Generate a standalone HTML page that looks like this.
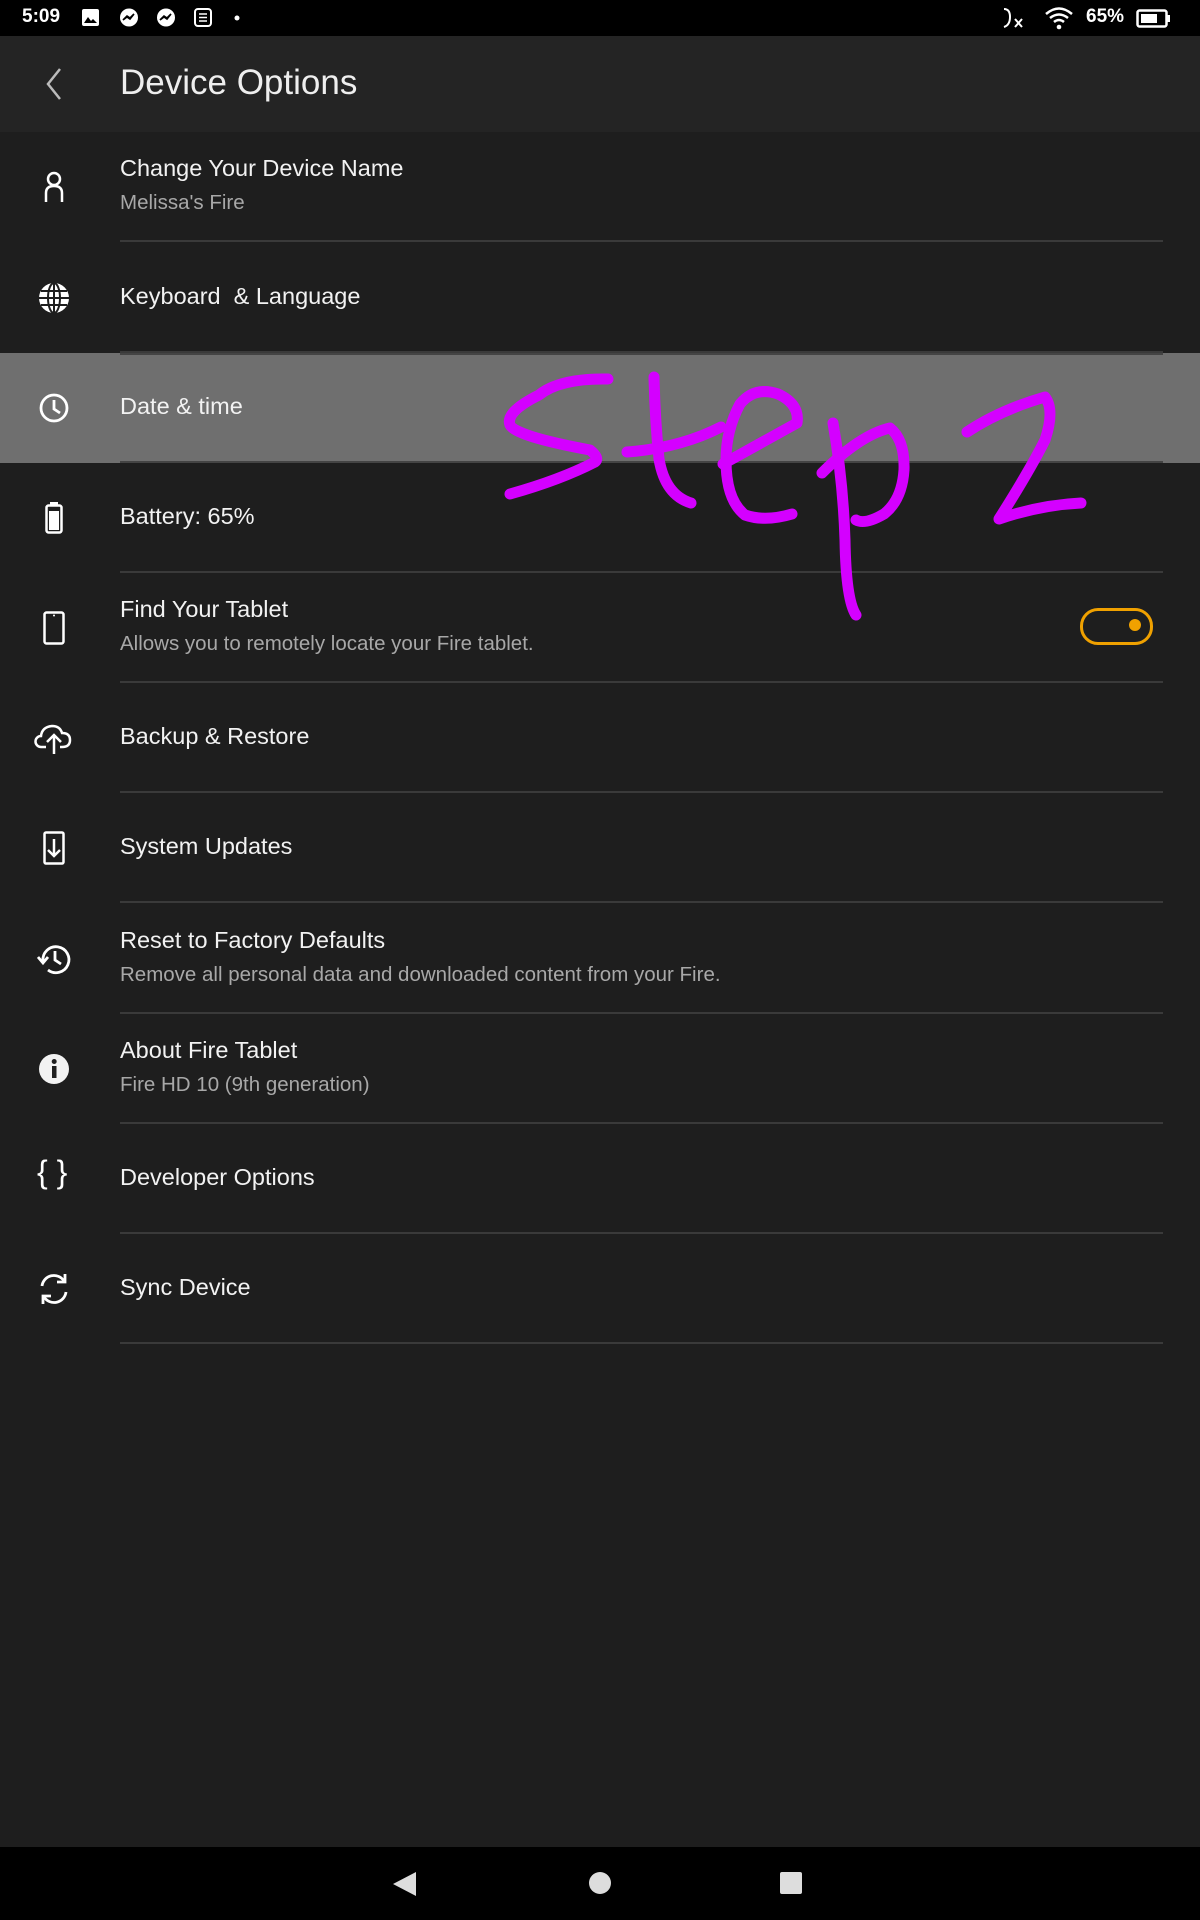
<!DOCTYPE html>
<html><head><meta charset="utf-8"><style>
body{margin:0;width:1200px;height:1920px;background:#1e1e1e;font-family:"Liberation Sans",sans-serif;position:relative;overflow:hidden;color:#f0f0f0}
.abs{position:absolute}
.sb{left:0;top:0;width:1200px;height:36px;background:#000}
.hd{left:0;top:36px;width:1200px;height:96px;background:#242424}
.row{position:absolute;left:0;width:1200px;height:110px}
.row .sep{position:absolute;left:120px;right:37px;bottom:0;height:2px;background:#3a3a3a}
.t{position:absolute;left:120px;font-size:23.5px;color:#f2f2f2;white-space:nowrap}
.s{position:absolute;left:120px;font-size:20.5px;color:#a8a8a8;white-space:nowrap}
.ic{position:absolute;left:36px;width:36px;height:36px}
</style></head><body>
<div class="abs sb"></div>
<div class="abs" style="left:22px;top:6px;font-size:19px;color:#fff;font-weight:bold">5:09</div>
<svg class="abs" style="left:80px;top:7px" width="170" height="22" viewBox="0 0 170 22">
<rect x="2" y="2" width="17" height="17" rx="2" fill="#fff"/><path d="M4 16l4-6 3 4 2-2 4 4z" fill="#000"/>
<circle cx="49" cy="10.5" r="9" fill="#fff"/><path d="M43 13l4-4 3 2 4-4-4 5-3-2z" stroke="#000" stroke-width="1.6" fill="none"/>
<circle cx="86" cy="10.5" r="9" fill="#fff"/><path d="M80 13l4-4 3 2 4-4-4 5-3-2z" stroke="#000" stroke-width="1.6" fill="none"/>
<rect x="115" y="2" width="16" height="17" rx="3" fill="none" stroke="#fff" stroke-width="2"/><path d="M119 7h8M119 10.5h8M119 14h8" stroke="#fff" stroke-width="1.5"/>
<circle cx="157" cy="11" r="2.5" fill="#fff"/></svg>
<svg class="abs" style="left:1000px;top:5px" width="30" height="26"><path d="M4 4q6 0 6 8 0 8-6 10" stroke="#fff" stroke-width="2" fill="none"/><path d="M15 14l7 8M22 14l-7 8" stroke="#fff" stroke-width="2"/></svg>
<svg class="abs" style="left:1044px;top:5px" width="30" height="26" viewBox="0 0 30 26"><path d="M2 9q13-11 26 0M6 13q9-7 18 0M10 17q5-4 10 0" stroke="#fff" stroke-width="2.5" fill="none"/><circle cx="15" cy="22" r="2.3" fill="#fff"/></svg>
<div class="abs" style="left:1086px;top:6px;font-size:19px;color:#fff;font-weight:bold">65%</div>
<svg class="abs" style="left:1136px;top:9px" width="36" height="20"><rect x="1.5" y="1.5" width="29" height="16" rx="2" fill="none" stroke="#fff" stroke-width="2.5"/><rect x="5" y="5" width="16" height="9" fill="#fff"/><rect x="31" y="6" width="3" height="7" fill="#fff"/></svg>

<div class="abs hd"></div>
<svg class="abs" style="left:40px;top:66px" width="26" height="36"><path d="M20 3L8 18l12 15" stroke="#bbb" stroke-width="2.5" fill="none"/></svg>
<div class="abs" style="left:120px;top:63px;font-size:35px;color:#eee">Device Options</div>

<div class="row" style="top:132px"><div class="sep"></div>
<svg class="ic" style="top:37px" viewBox="0 0 36 36"><circle cx="18" cy="10" r="6" fill="none" stroke="#fff" stroke-width="2.5"/><path d="M10 33V24q0-7 8-7t8 7v9" fill="none" stroke="#fff" stroke-width="2.5"/></svg>
<div class="t" style="top:23px">Change Your Device Name</div><div class="s" style="top:59px">Melissa's Fire</div></div>

<div class="row" style="top:243px"><div class="sep"></div>
<svg class="ic" style="top:37px" viewBox="0 0 36 36"><circle cx="18" cy="18" r="15" fill="#fff"/><g stroke="#1e1e1e" stroke-width="2" fill="none"><ellipse cx="18" cy="18" rx="6" ry="15"/><path d="M18 3v30M3 18h30M5 11h26M5 25h26"/></g></svg>
<div class="t" style="top:40px">Keyboard&nbsp; &amp; Language</div></div>

<div class="row" style="top:353px;background:#6f6f6f;height:110px"><div class="sep" style="top:0;bottom:auto;background:#444"></div><div class="sep" style="background:#444"></div>
<svg class="ic" style="top:37px" viewBox="0 0 36 36"><circle cx="18" cy="18" r="13" fill="none" stroke="#fff" stroke-width="2.8"/><path d="M18 10v9l6 4" stroke="#fff" stroke-width="2.8" fill="none"/></svg>
<div class="t" style="top:40px">Date &amp; time</div></div>

<div class="row" style="top:463px"><div class="sep"></div>
<svg class="ic" style="top:37px" viewBox="0 0 36 36"><rect x="14" y="2" width="8" height="4" fill="#fff"/><rect x="10.5" y="5.5" width="15" height="27" rx="2" fill="none" stroke="#fff" stroke-width="2.5"/><rect x="13" y="11" width="10" height="19" fill="#fff"/></svg>
<div class="t" style="top:40px">Battery: 65%</div></div>

<div class="row" style="top:573px"><div class="sep"></div>
<svg class="ic" style="top:37px" viewBox="0 0 36 36"><rect x="8.5" y="2.5" width="19" height="31" rx="2" fill="none" stroke="#fff" stroke-width="2.5"/><circle cx="18" cy="5.5" r="1" fill="#fff"/></svg>
<div class="t" style="top:23px">Find Your Tablet</div><div class="s" style="top:59px">Allows you to remotely locate your Fire tablet.</div>
<div class="abs" style="left:1080px;top:35px;width:67px;height:31px;border:3px solid #f0a100;border-radius:18px"></div>
<div class="abs" style="left:1129px;top:46px;width:12px;height:12px;border-radius:50%;background:#f0a100"></div></div>

<div class="row" style="top:683px"><div class="sep"></div>
<svg class="ic" style="top:37px;left:34px;width:40px" viewBox="0 0 40 36"><path d="M12 27H7a5.5 5.5 0 010-11q1-9 11-10 8 0 10 7 8 0 8 7t-8 7h-2" fill="none" stroke="#fff" stroke-width="2.5"/><path d="M20 34V16M13 22l7-7 7 7" stroke="#fff" stroke-width="2.5" fill="none"/></svg>
<div class="t" style="top:40px">Backup &amp; Restore</div></div>

<div class="row" style="top:793px"><div class="sep"></div>
<svg class="ic" style="top:37px" viewBox="0 0 36 36"><rect x="8.5" y="2.5" width="19" height="31" rx="1.5" fill="none" stroke="#fff" stroke-width="2.5"/><path d="M18 9v17M12 20l6 6 6-6" stroke="#fff" stroke-width="2.5" fill="none"/></svg>
<div class="t" style="top:40px">System Updates</div></div>

<div class="row" style="top:904px"><div class="sep"></div>
<svg class="ic" style="top:37px" viewBox="0 0 36 36"><path d="M7 20A13 13 0 1 1 12 29" fill="none" stroke="#fff" stroke-width="2.8"/><path d="M2 16l5 6 5-6" stroke="#fff" stroke-width="2.8" fill="none"/><path d="M19 10v9l6 4" stroke="#fff" stroke-width="2.8" fill="none"/></svg>
<div class="t" style="top:23px">Reset to Factory Defaults</div><div class="s" style="top:59px">Remove all personal data and downloaded content from your Fire.</div></div>

<div class="row" style="top:1014px"><div class="sep"></div>
<svg class="ic" style="top:37px" viewBox="0 0 36 36"><circle cx="18" cy="18" r="15" fill="#f2f2f2"/><rect x="16" y="15" width="4.5" height="12" fill="#1e1e1e"/><circle cx="18.2" cy="10.5" r="2.5" fill="#1e1e1e"/></svg>
<div class="t" style="top:23px">About Fire Tablet</div><div class="s" style="top:59px">Fire HD 10 (9th generation)</div></div>

<div class="row" style="top:1124px"><div class="sep"></div>
<div class="abs" style="left:37px;top:30px;font-size:32px;color:#fff">{ }</div>
<div class="t" style="top:40px">Developer Options</div></div>

<div class="row" style="top:1234px"><div class="sep"></div>
<svg class="ic" style="top:37px" viewBox="0 0 36 36"><path d="M6 15A12 12 0 0 1 28 10M30 21A12 12 0 0 1 8 26" fill="none" stroke="#fff" stroke-width="2.8"/><path d="M29 3v8h-8M7 33v-8h8" stroke="#fff" stroke-width="2.8" fill="none"/></svg>
<div class="t" style="top:40px">Sync Device</div></div>

<svg class="abs" style="left:0;top:0" width="1200" height="700">
<g fill="none" stroke="#d400ff" stroke-width="11" stroke-linecap="round" stroke-linejoin="round">
<path d="M608 379Q560 378 539 395Q505 412 510 425Q515 436 590 450Q600 458 595 462Q560 480 510 494"/>
<path d="M654 377Q655 420 659 459Q665 495 691 503"/>
<path d="M627 452Q680 448 721 427"/>
<path d="M723 464L797 423Q800 404 778 394Q755 386 740 404Q726 430 726 460Q726 500 745 515Q765 522 792 514"/>
<path d="M833 423Q843 480 845 540Q846 600 856 615"/>
<path d="M822 473Q860 435 890 428Q905 440 904 470Q902 500 884 514Q865 525 856 520"/>
<path d="M967 432Q1000 410 1045 397Q1055 410 1045 440Q1030 470 999 519Q1040 505 1081 503"/>
</g></svg>

<div class="abs" style="left:0;top:1847px;width:1200px;height:73px;background:#000"></div>
<svg class="abs" style="left:390px;top:1870px" width="30" height="28"><path d="M26 2v24L3 14z" fill="#ddd"/></svg>
<div class="abs" style="left:589px;top:1872px;width:22px;height:22px;border-radius:50%;background:#ddd"></div>
<div class="abs" style="left:780px;top:1872px;width:22px;height:22px;border-radius:2px;background:#ddd"></div>
</body></html>
